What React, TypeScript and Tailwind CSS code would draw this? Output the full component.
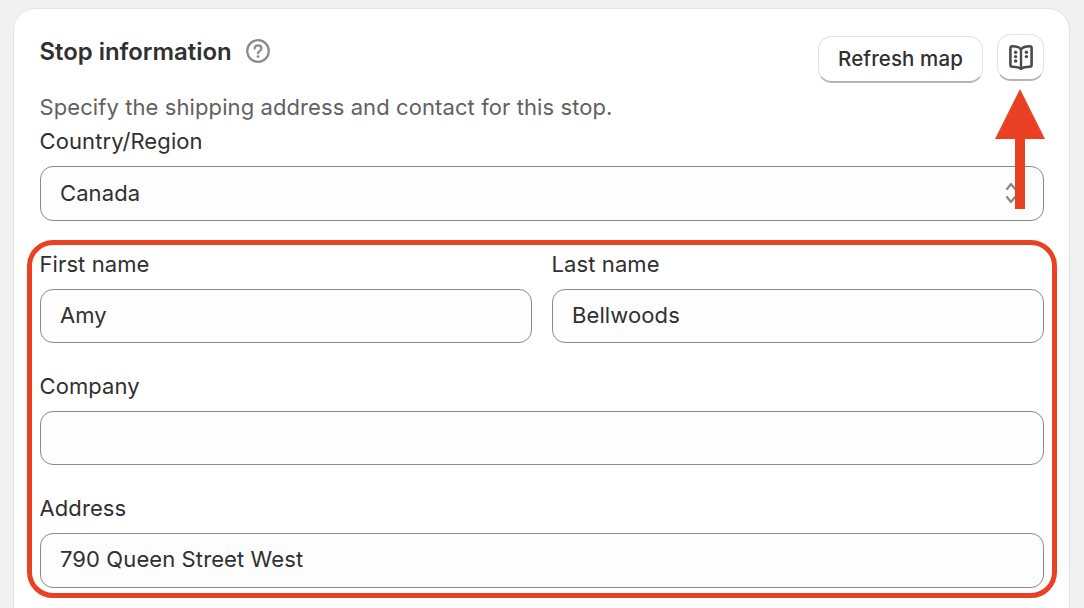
import React from 'react';

const FONT = "font-['Inter',_'Liberation_Sans',_sans-serif]";

function HelpIcon() {
  return (
    <svg width="26" height="26" viewBox="0 0 26 26" fill="none" className="ml-[13px] mt-[-3px]">
      <circle cx="13" cy="13" r="10.8" stroke="#8a8a8a" strokeWidth="2.2" />
      <path
        d="M9.6 10.6c0-1.9 1.5-3.2 3.4-3.2s3.4 1.2 3.4 3c0 2.6-3.4 2.6-3.4 4.9"
        stroke="#8a8a8a"
        strokeWidth="2.2"
        strokeLinecap="round"
      />
      <circle cx="13" cy="18.6" r="1.4" fill="#8a8a8a" />
    </svg>
  );
}

function BookIcon() {
  return (
    <svg width="24" height="26" viewBox="0 0 24 26" fill="none">
      <path
        d="M12 5.2C10.4 3.2 7.5 2.2 3.4 2.2 2.3 2.2 1.4 3.1 1.4 4.2v16.6c0 1.1.9 2 2 2 3.8 0 6.6.5 8.6 2.1 2-1.6 4.8-2.1 8.6-2.1 1.1 0 2-.9 2-2V4.2c0-1.1-.9-2-2-2-4.1 0-7 1-8.6 3Z"
        stroke="#4a4a4a"
        strokeWidth="2.6"
        strokeLinejoin="round"
      />
      <path d="M12 5v19" stroke="#4a4a4a" strokeWidth="2.4" />
      <circle cx="6.6" cy="8.2" r="1.7" fill="#4a4a4a" />
      <circle cx="6.6" cy="12.6" r="1.7" fill="#4a4a4a" />
      <circle cx="6.6" cy="17" r="1.7" fill="#4a4a4a" />
      <circle cx="17.4" cy="8.2" r="1.7" fill="#4a4a4a" />
      <circle cx="17.4" cy="12.6" r="1.7" fill="#4a4a4a" />
    </svg>
  );
}

function Field({ label, value, select }: { label: string; value?: string; select?: boolean }) {
  return (
    <div className="min-w-0 flex-1">
      <div className="-ml-[0.5px] mb-[10px] h-[30px] text-[22px] leading-[30px] tracking-[0.1px] text-[#303030]">{label}</div>
      <div className="flex h-[54.5px] items-center justify-between rounded-[13px] border border-[#8a8a8a] bg-[#fdfdfd] pb-[1px] pl-[19px] pr-[26px] text-[22px] tracking-[0.1px] text-[#303030]">
        <span>{value}</span>
        {select && (
          <svg width="12" height="24" viewBox="0 0 12 24" fill="none">
            <path d="M2 8l4-5 4 5M2 16l4 5 4-5" stroke="#8a8a8a" strokeWidth="2.2" strokeLinecap="round" strokeLinejoin="round" />
          </svg>
        )}
      </div>
    </div>
  );
}

export default function App() {
  return (
    <div className={`relative h-[608px] w-[1084px] overflow-hidden bg-[#f1f1f1] pl-[13px] pt-[8px] ${FONT}`}>
      <div className="h-[640px] w-[1057px] rounded-t-[22px] border border-[#e3e3e3] bg-white pl-[26px] pr-[25px]">
        {/* Header */}
        <div className="flex h-[83px] items-start justify-between">
          <div className="-ml-[0.5px] flex items-center pt-[26px]">
            <h2 className="text-[23.9px] font-semibold leading-[34px] text-[#303030]">Stop information</h2>
            <HelpIcon />
          </div>
          <div className="flex items-start gap-[14px] pt-[25px]">
            <button className="mt-[2px] h-[47px] w-[165px] rounded-[14px] border border-[#e3e3e3] border-b-[2px] border-b-[#b5b5b5] bg-white text-[20.5px] font-medium tracking-[0.1px] text-[#303030]">
              Refresh map
            </button>
            <button className="flex h-[47px] w-[47px] items-center justify-center rounded-[14px] border border-[#e3e3e3] border-b-[2px] border-b-[#b5b5b5] bg-white">
              <BookIcon />
            </button>
          </div>
        </div>

        <p className="-ml-[0.5px] h-[34.3px] text-[22px] leading-[30px] tracking-[0.09px] text-[#616161]">
          Specify the shipping address and contact for this stop.
        </p>

        {/* Form */}
        <div className="flex flex-col gap-[27.8px]">
          <Field label="Country/Region" value="Canada" select />
          <div className="flex gap-[20px]">
            <Field label="First name" value="Amy" />
            <Field label="Last name" value="Bellwoods" />
          </div>
          <Field label="Company" />
          <Field label="Address" value="790 Queen Street West" />
        </div>
      </div>

      {/* Annotations */}
      <div className="absolute left-[27px] top-[239.5px] h-[358.5px] w-[1030px] rounded-[26px] border-[5px] border-[#ea4125]" />
      <svg className="absolute left-[995px] top-[89px]" width="50" height="120" viewBox="0 0 50 120">
        <path d="M25 0L50 50H30V120H20V50H0Z" fill="#ea4125" />
      </svg>
    </div>
  );
}
